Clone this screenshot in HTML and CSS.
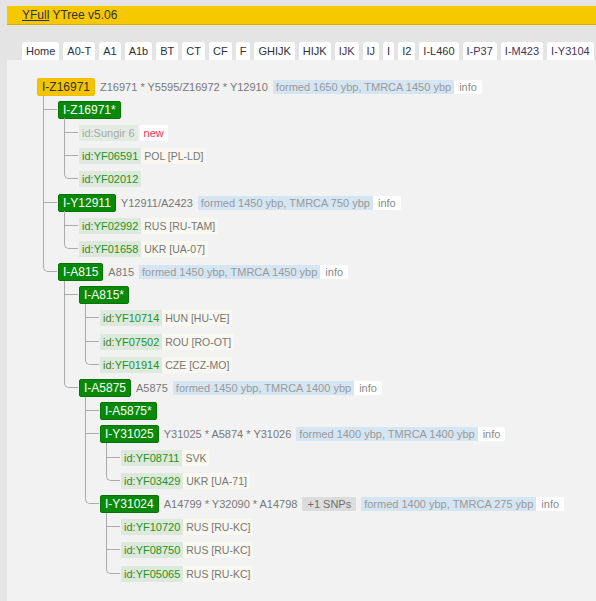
FILE: index.html
```html
<!DOCTYPE html>
<html>
<head>
<meta charset="utf-8">
<title>YFull YTree v5.06</title>
<link rel="stylesheet" href="styles.css">
</head>
<body>
<div class="page">
  <div class="header"><a class="brand" href="#">YFull</a> YTree v5.06</div>
  <div class="tabs">
    <span class="tab">Home</span>
    <span class="tab">A0-T</span>
    <span class="tab">A1</span>
    <span class="tab">A1b</span>
    <span class="tab">BT</span>
    <span class="tab">CT</span>
    <span class="tab">CF</span>
    <span class="tab">F</span>
    <span class="tab">GHIJK</span>
    <span class="tab">HIJK</span>
    <span class="tab visited">IJK</span>
    <span class="tab visited">IJ</span>
    <span class="tab">I</span>
    <span class="tab">I2</span>
    <span class="tab">I-L460</span>
    <span class="tab visited">I-P37</span>
    <span class="tab visited">I-M423</span>
    <span class="tab visited">I-Y3104</span>
  </div>
  <div class="panel">
    <ul class="tree">
      <li>
        <div class="row"><span class="node node-root">I-Z16971</span><span class="desc">Z16971 * Y5595/Z16972 * Y12910</span><span class="formed">formed 1650 ybp, TMRCA 1450 ybp</span><span class="info">info</span></div>
        <ul class="kids">
          <li>
            <div class="row"><span class="node">I-Z16971*</span></div>
            <ul class="kids">
              <li><div class="row"><span class="id id-muted">id:Sungir 6</span><span class="new">new</span></div></li>
              <li><div class="row"><span class="id"><span class="id-pre">id:</span>YF06591</span><span class="loc">POL [PL-LD]</span></div></li>
              <li><div class="row"><span class="id"><span class="id-pre">id:</span>YF02012</span></div></li>
            </ul>
          </li>
          <li>
            <div class="row"><span class="node">I-Y12911</span><span class="desc">Y12911/A2423</span><span class="formed">formed 1450 ybp, TMRCA 750 ybp</span><span class="info">info</span></div>
            <ul class="kids">
              <li><div class="row"><span class="id"><span class="id-pre">id:</span>YF02992</span><span class="loc">RUS [RU-TAM]</span></div></li>
              <li><div class="row"><span class="id"><span class="id-pre">id:</span>YF01658</span><span class="loc">UKR [UA-07]</span></div></li>
            </ul>
          </li>
          <li>
            <div class="row"><span class="node">I-A815</span><span class="desc">A815</span><span class="formed">formed 1450 ybp, TMRCA 1450 ybp</span><span class="info">info</span></div>
            <ul class="kids">
              <li>
                <div class="row"><span class="node">I-A815*</span></div>
                <ul class="kids">
                  <li><div class="row"><span class="id"><span class="id-pre">id:</span>YF10714</span><span class="loc">HUN [HU-VE]</span></div></li>
                  <li><div class="row"><span class="id"><span class="id-pre">id:</span>YF07502</span><span class="loc">ROU [RO-OT]</span></div></li>
                  <li><div class="row"><span class="id"><span class="id-pre">id:</span>YF01914</span><span class="loc">CZE [CZ-MO]</span></div></li>
                </ul>
              </li>
              <li>
                <div class="row"><span class="node">I-A5875</span><span class="desc">A5875</span><span class="formed">formed 1450 ybp, TMRCA 1400 ybp</span><span class="info">info</span></div>
                <ul class="kids">
                  <li><div class="row"><span class="node">I-A5875*</span></div></li>
                  <li>
                    <div class="row"><span class="node">I-Y31025</span><span class="desc">Y31025 * A5874 * Y31026</span><span class="formed">formed 1400 ybp, TMRCA 1400 ybp</span><span class="info">info</span></div>
                    <ul class="kids">
                      <li><div class="row"><span class="id"><span class="id-pre">id:</span>YF08711</span><span class="loc">SVK</span></div></li>
                      <li><div class="row"><span class="id"><span class="id-pre">id:</span>YF03429</span><span class="loc">UKR [UA-71]</span></div></li>
                    </ul>
                  </li>
                  <li>
                    <div class="row"><span class="node">I-Y31024</span><span class="desc">A14799 * Y32090 * A14798</span><span class="snps">+1 SNPs</span><span class="formed">formed 1400 ybp, TMRCA 275 ybp</span><span class="info">info</span></div>
                    <ul class="kids">
                      <li><div class="row"><span class="id"><span class="id-pre">id:</span>YF10720</span><span class="loc">RUS [RU-KC]</span></div></li>
                      <li><div class="row"><span class="id"><span class="id-pre">id:</span>YF08750</span><span class="loc">RUS [RU-KC]</span></div></li>
                      <li><div class="row"><span class="id"><span class="id-pre">id:</span>YF05065</span><span class="loc">RUS [RU-KC]</span></div></li>
                    </ul>
                  </li>
                </ul>
              </li>
            </ul>
          </li>
        </ul>
      </li>
    </ul>
  </div>
</div>
</body>
</html>
```
FILE: styles.css
```css
html, body {
  margin: 0;
  padding: 0;
  background: #e4e4e4;
  overflow: hidden;
}
body {
  font-family: "Liberation Sans", Arial, sans-serif;
  color: #333;
}
.page {
  padding: 6px 0 0 7px;
  min-height: 595px;
  display: flex;
  flex-direction: column;
}
.header {
  background: #f5c800;
  border-bottom: 1px solid #dcae00;
  height: 18px;
  line-height: 18px;
  font-size: 12px;
  padding-left: 15px;
  color: #333;
  white-space: nowrap;
}
.brand {
  color: #1d3763;
  text-decoration: underline;
}
.tabs {
  display: flex;
  gap: 4px;
  padding: 17px 0 0 15px;
  white-space: nowrap;
}
.tab {
  background: #fff;
  font-size: 11px;
  line-height: 18px;
  height: 18px;
  padding: 0 4px;
  border-radius: 3px 3px 0 0;
  color: #2f2f3a;
  flex: none;
}
.tab.visited {
  color: #4a3358;
}
.panel {
  flex: 1;
  background: #f2f2f2;
  padding: 15px 0 20px 30px;
}
ul {
  list-style: none;
  margin: 0;
  padding: 0;
}
.kids {
  padding-left: 21px;
}
.kids > li {
  position: relative;
}
.kids > li::before {
  content: "";
  position: absolute;
  left: -15px;
  top: -3px;
  width: 14px;
  height: 14.6px;
  box-sizing: border-box;
  border-left: 1px solid #ababab;
  border-bottom: 1px solid #ababab;
}
.kids > li:last-child::before {
  border-bottom-left-radius: 5px;
}
.kids > li:not(:last-child)::after {
  content: "";
  position: absolute;
  left: -15px;
  top: 0;
  bottom: 0;
  border-left: 1px solid #ababab;
}
.row {
  display: flex;
  align-items: center;
  height: 23.2px;
  white-space: nowrap;
}
.node {
  font-size: 12px;
  line-height: 16px;
  padding: 0 4px;
  border: 1px solid #067306;
  border-radius: 2px;
  background: #088a08;
  color: #fff;
}
.node-root {
  background: #f5c400;
  border-color: #f0bd00;
  color: #333;
}
.desc {
  font-size: 11px;
  color: #787878;
  margin-left: 5px;
}
.formed {
  font-size: 11px;
  line-height: 14px;
  color: #9a9a9a;
  background: #d5e5f2;
  padding: 0 3px;
  margin-left: 5px;
}
.info {
  font-size: 11px;
  line-height: 14px;
  color: #8a8a8a;
  background: #fff;
  padding: 0 5px;
  border-radius: 0 2px 2px 0;
}
.snps {
  font-size: 11px;
  line-height: 14px;
  color: #6f6f6f;
  background: #dcdcdc;
  padding: 0 5px;
  margin-left: 5px;
}
.id {
  font-size: 11px;
  line-height: 16px;
  padding: 0 3px;
  background: #dde9dd;
  color: #1f931f;
}
.id-pre {
  color: #4a7f20;
}
.id-muted {
  color: #a9a9a9;
  background: #e3ebe3;
}
.loc {
  font-size: 10.5px;
  line-height: 16px;
  color: #777;
  background: #f8f7f0;
  padding: 0 3px;
}
.new {
  font-size: 11px;
  line-height: 16px;
  color: #f0305a;
  background: #fff;
  padding: 0 4px;
  margin-left: 2px;
}
```
